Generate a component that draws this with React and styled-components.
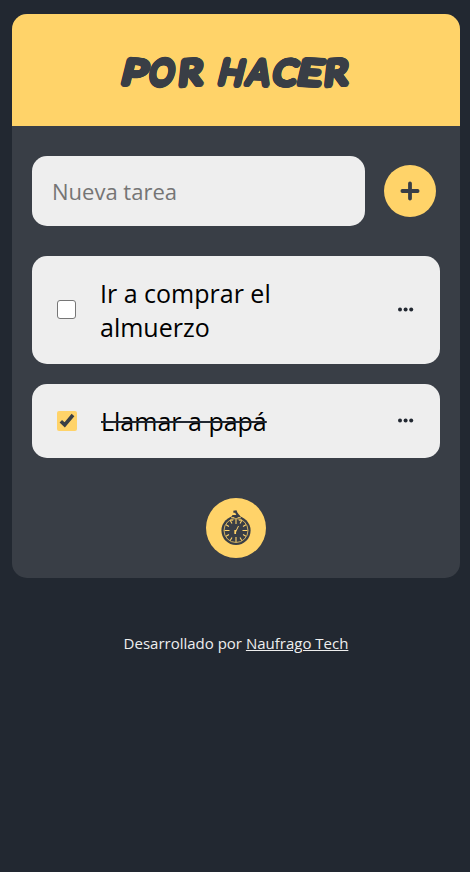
import React, { useState } from 'react';
import styled, { createGlobalStyle } from 'styled-components';

const GlobalStyle = createGlobalStyle`
  * { box-sizing: border-box; }
  body {
    margin: 0;
    min-height: 100vh;
    background: #222831;
    font-family: 'Open Sans', sans-serif;
  }
`;

const Page = styled.main`
  padding: 14px 10px 0 12px;
`;

const Card = styled.section`
  height: 564px;
  border-radius: 15px;
  background: #393e46;
  overflow: hidden;
`;

const Header = styled.header`
  height: 112px;
  display: flex;
  align-items: center;
  justify-content: center;
  background: #ffd369;
`;

// Round marker strokes: copies of the letter spread on a small circle.
const inkSpread = Array.from({ length: 16 }, (_, i) => {
  const angle = (i * Math.PI) / 8;
  return `${(Math.cos(angle) * 2.2).toFixed(2)}px ${(Math.sin(angle) * 2.6).toFixed(2)}px 0 #393e46`;
}).join(', ');

const Title = styled.h1`
  margin: 1px 0 0 1px;
  display: flex;
  color: #393e46;
  font: 400 35px/54px Lato, sans-serif;
  text-shadow: ${inkSpread};
  white-space: pre;
`;

const Letter = styled.span`
  display: flex;
  justify-content: center;
  width: ${({ $w }) => $w}px;
  transform: rotate(${({ $turn }) => $turn}deg) skewX(-10deg) scaleX(${({ $stretch }) => $stretch});
`;

const Content = styled.div`
  padding: 30px 20px 20px;
`;

const Form = styled.form`
  display: flex;
  align-items: center;
  margin-bottom: 30px;
`;

const Field = styled.input`
  width: 333px;
  height: 70px;
  padding: 0 20px;
  border: 0;
  border-radius: 15px;
  background: #eee;
  color: #222831;
  font: 400 22px 'Open Sans', sans-serif;
  &::placeholder { color: #757575; opacity: 1; }
`;

const RoundButton = styled.button`
  display: flex;
  align-items: center;
  justify-content: center;
  width: ${({ $size }) => $size}px;
  height: ${({ $size }) => $size}px;
  padding: 0;
  border: 0;
  border-radius: 50%;
  background: #ffd369;
  color: #393e46;
`;

const AddButton = styled(RoundButton)`
  margin-left: 19px;
`;

const List = styled.ul`
  display: grid;
  gap: 20px;
  margin: 0 0 40px;
  padding: 0;
  list-style: none;
`;

const Item = styled.li`
  display: flex;
  align-items: center;
  padding: 20px 26px 20px 25px;
  border-radius: 15px;
  background: #eee;
`;

const Check = styled.button`
  display: flex;
  flex: none;
  width: ${({ $done }) => ($done ? 20 : 19)}px;
  height: ${({ $done }) => ($done ? 20 : 19)}px;
  margin-bottom: ${({ $done }) => ($done ? 0 : 1)}px;
  padding: 0;
  border: ${({ $done }) => ($done ? '0' : '1px solid #767676')};
  border-radius: ${({ $done }) => ($done ? 2 : 3)}px;
  background: ${({ $done }) => ($done ? '#ffd369' : '#fff')};
`;

const Label = styled.span`
  width: 215px;
  margin-left: 24px;
  color: #000;
  font-size: 25px;
  font-weight: 400;
  line-height: 34px;
  text-decoration: ${({ $done }) => ($done ? 'line-through 2px #222831' : 'none')};
`;

const MenuButton = styled.button`
  display: flex;
  margin: 0 0 1px auto;
  padding: 0;
  border: 0;
  background: none;
`;

const TimerRow = styled.div`
  display: flex;
  justify-content: center;
`;

const Footer = styled.footer`
  margin-top: 55px;
  color: #eee;
  font-size: 15px;
  line-height: 21px;
  text-align: center;
`;

const Link = styled.a`
  color: inherit;
  text-decoration: underline;
`;

const letters = [
  ['P', 25, 4, 1.2], ['O', 29, 0, 0.88], ['R', 28, -4, 1.12], [' ', 14, 0, 1],
  ['H', 27, 4, 0.95], ['A', 27, 3, 0.95], ['C', 26, 4, 1.02], ['E', 24, 3, 1.25], ['R', 27, -4, 1.1],
];

const tasks = [
  { text: 'Ir a comprar el almuerzo', done: false },
  { text: 'Llamar a papá', done: true },
];

function PlusIcon() {
  return (
    <svg width="20" height="20" viewBox="0 0 20 20" fill="none" stroke="currentColor" strokeWidth="3.8" strokeLinecap="round">
      <path d="M10 2.4v15.2M2.4 10h15.2" />
    </svg>
  );
}

function CheckIcon() {
  return (
    <svg width="20" height="20" viewBox="0 0 20 20" fill="none" stroke="#393e46" strokeWidth="3.6">
      <path d="M3.8 10.3l3.9 3.6L16 4" />
    </svg>
  );
}

function DotsIcon() {
  return (
    <svg width="16" height="5" viewBox="0 0 16 5" fill="#222831">
      <circle cx="2" cy="2.5" r="2" />
      <circle cx="7.6" cy="2.5" r="2" />
      <circle cx="13.2" cy="2.5" r="2" />
    </svg>
  );
}

function StopwatchIcon() {
  const ticks = Array.from({ length: 12 }, (_, i) => i * 30);
  return (
    <svg width="30" height="36" viewBox="0 0 30 36">
      <circle cx="15" cy="20.5" r="14.6" fill="#393e46" />
      <path d="M9.5 8.5L11.5 5h7L20.5 8.5z" fill="#393e46" />
      <path d="M12.4 1.8l2.4-.4 1 2.4 1.6 2" fill="none" stroke="#393e46" strokeWidth="2.2" />
      <path d="M10.2 7.7h3.2M16.6 7.7h3.2M9.2 10.2h3M17.8 10.2h3" stroke="#ffd369" strokeWidth="1" />
      <circle cx="15" cy="20.5" r="12" fill="none" stroke="#ffd369" strokeWidth=".9" opacity=".85" />
      <g stroke="#ffd369" strokeWidth="1.1">
        {ticks.map((a) => (
          <path key={a} d={a % 90 === 0 ? 'M15 9v5' : 'M15 9v3.4'} transform={`rotate(${a} 15 20.5)`} />
        ))}
      </g>
      <path d="M14.3 22.5l3.2-6.5" stroke="#ffd369" strokeWidth="1" />
      <path d="M14.2 20v4" stroke="#ffd369" strokeWidth="1.7" />
    </svg>
  );
}

export default function App() {
  const [items, setItems] = useState(tasks);
  const toggle = (index) =>
    setItems(items.map((item, i) => (i === index ? { ...item, done: !item.done } : item)));

  return (
    <>
      <GlobalStyle />
      <Page>
        <Card>
          <Header>
            <Title>
              {letters.map(([char, w, turn, stretch], i) => (
                <Letter key={i} $w={w} $turn={turn} $stretch={stretch}>{char}</Letter>
              ))}
            </Title>
          </Header>
          <Content>
            <Form onSubmit={(e) => e.preventDefault()}>
              <Field placeholder="Nueva tarea" />
              <AddButton $size={52} aria-label="Agregar"><PlusIcon /></AddButton>
            </Form>
            <List>
              {items.map(({ text, done }, i) => (
                <Item key={text}>
                  <Check $done={done} role="checkbox" aria-checked={done} onClick={() => toggle(i)}>
                    {done && <CheckIcon />}
                  </Check>
                  <Label $done={done}>{text}</Label>
                  <MenuButton aria-label="Opciones"><DotsIcon /></MenuButton>
                </Item>
              ))}
            </List>
            <TimerRow>
              <RoundButton $size={60} aria-label="Temporizador"><StopwatchIcon /></RoundButton>
            </TimerRow>
          </Content>
        </Card>
        <Footer>
          Desarrollado por <Link href="#">Naufrago Tech</Link>
        </Footer>
      </Page>
    </>
  );
}
